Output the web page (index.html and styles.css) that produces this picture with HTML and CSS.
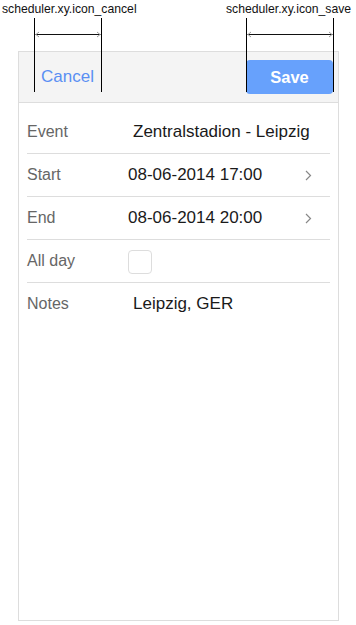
FILE: index.html
```html
<!DOCTYPE html>
<html lang="en">
<head>
<meta charset="UTF-8">
<meta name="viewport" content="width=device-width, initial-scale=1.0">
<title>Scheduler form</title>
<link rel="stylesheet" href="styles.css">
</head>
<body>
    <div class="page">
        <div class="marker marker-cancel">
            <span class="marker-label">scheduler.xy.icon_cancel</span>
            <div class="marker-span">
                <svg class="arrow" width="66" height="7" viewBox="0 0 66 7">
                    <path d="M0.5 3.5H65.5" stroke="#111" stroke-width="1"/>
                    <path d="M4 1L1 3.5L4 6M62 1L65 3.5L62 6" stroke="#999" stroke-width="1" fill="none"/>
                </svg>
            </div>
        </div>
        <div class="marker marker-save">
            <span class="marker-label">scheduler.xy.icon_save</span>
            <div class="marker-span">
                <svg class="arrow" width="86" height="7" viewBox="0 0 86 7">
                    <path d="M0.5 3.5H85.5" stroke="#111" stroke-width="1"/>
                    <path d="M4 1L1 3.5L4 6M82 1L85 3.5L82 6" stroke="#999" stroke-width="1" fill="none"/>
                </svg>
            </div>
        </div>

        <div class="scheduler">
            <div class="toolbar">
                <span class="btn-cancel">Cancel</span>
                <span class="btn-save">Save</span>
            </div>
            <div class="form">
                <div class="row">
                    <span class="label">Event</span>
                    <span class="value text">Zentralstadion - Leipzig</span>
                </div>
                <div class="row">
                    <span class="label">Start</span>
                    <span class="value">08-06-2014 17:00</span>
                    <span class="chevron">
                        <svg width="7" height="11" viewBox="0 0 7 11"><path d="M1 1L5.5 5.5L1 10" stroke="#888" stroke-width="1.2" fill="none"/></svg>
                    </span>
                </div>
                <div class="row">
                    <span class="label">End</span>
                    <span class="value">08-06-2014 20:00</span>
                    <span class="chevron">
                        <svg width="7" height="11" viewBox="0 0 7 11"><path d="M1 1L5.5 5.5L1 10" stroke="#888" stroke-width="1.2" fill="none"/></svg>
                    </span>
                </div>
                <div class="row">
                    <span class="label">All day</span>
                    <span class="checkbox"></span>
                </div>
                <div class="row last">
                    <span class="label">Notes</span>
                    <span class="value text">Leipzig, GER</span>
                </div>
            </div>
        </div>
    </div>
</body>
</html>
```

FILE: styles.css
```css
body {
    margin: 0;
    background-color: #fff;
    font-family: 'Liberation Sans', Arial, sans-serif;
}
.page {
    position: relative;
    padding: 51px 17px 4px 18px;
}
.marker {
    position: absolute;
    top: 0;
    z-index: 2;
}
.marker-label {
    display: block;
    font-size: 12.2px;
    line-height: 18px;
    color: #111;
    white-space: nowrap;
}
.marker-span {
    position: absolute;
    top: 18px;
    height: 74px;
    border-left: 1px solid #000;
    border-right: 1px solid #000;
}
.arrow {
    display: block;
    margin-top: 13px;
}
.marker-cancel {
    left: 2px;
}
.marker-cancel .marker-span {
    left: 32px;
    width: 66px;
}
.marker-save {
    left: 226px;
}
.marker-save .marker-span {
    left: 20px;
    width: 86px;
}
.scheduler {
    border: 1px solid #ddd;
    height: 568px;
    background-color: #fff;
}
.toolbar {
    display: flex;
    align-items: center;
    justify-content: space-between;
    height: 50px;
    padding: 0 5px 0 22px;
    background-color: #f4f4f4;
    border-bottom: 1px solid #ddd;
}
.btn-cancel {
    font-size: 17px;
    color: #5a8ff3;
}
.btn-save {
    display: flex;
    align-items: center;
    justify-content: center;
    width: 87px;
    height: 34px;
    background-color: #67a1fc;
    border-radius: 4px;
    color: #fff;
    font-size: 16.5px;
    font-weight: bold;
}
.form {
    padding: 8px 8px 0 8px;
}
.row {
    display: flex;
    align-items: center;
    height: 42px;
    border-bottom: 1px solid #ddd;
}
.row.last {
    border-bottom: none;
}
.label {
    width: 101px;
    font-size: 16px;
    color: #666;
}
.value {
    flex: 1;
    font-size: 17px;
    color: #1a1a1a;
}
.value.text {
    padding-left: 5px;
}
.chevron {
    display: flex;
    margin-right: 18px;
}
.checkbox {
    width: 22px;
    height: 22px;
    margin-top: 2px;
    border: 1px solid #ddd;
    border-radius: 4px;
}
```
